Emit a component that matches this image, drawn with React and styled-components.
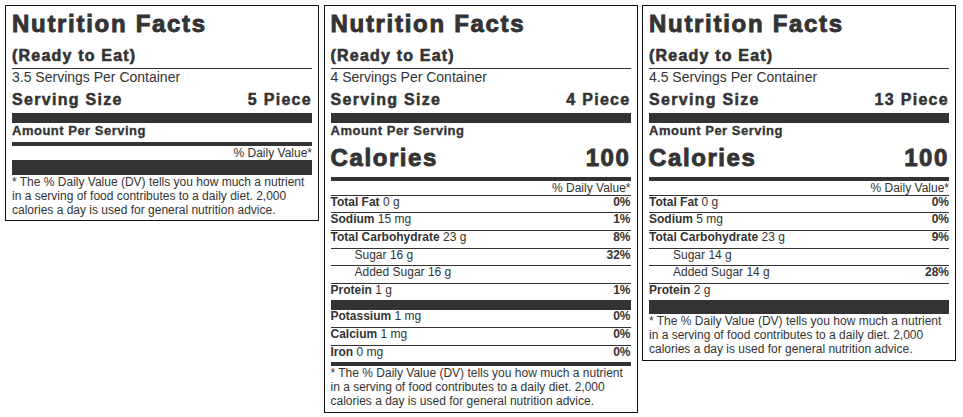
import React from "react";
import styled, { createGlobalStyle } from "styled-components";

const GlobalStyle = createGlobalStyle`
  body {
    margin: 0;
    background: #fff;
    font-family: "Liberation Sans", Arial, sans-serif;
  }
`;

const labels = [
    {servings: "3.5", size: "5 Piece", calories: null, nutrients: [], vitamins: []},
    {
        servings: "4", size: "4 Piece", calories: 100,
        nutrients: [
            {name: "Total Fat", amount: "0 g", dv: "0%"},
            {name: "Sodium", amount: "15 mg", dv: "1%"},
            {name: "Total Carbohydrate", amount: "23 g", dv: "8%"},
            {name: "Sugar", amount: "16 g", dv: "32%", sub: true},
            {name: "Added Sugar", amount: "16 g", sub: true},
            {name: "Protein", amount: "1 g", dv: "1%"},
        ],
        vitamins: [
            {name: "Potassium", amount: "1 mg", dv: "0%"},
            {name: "Calcium", amount: "1 mg", dv: "0%"},
            {name: "Iron", amount: "0 mg", dv: "0%"},
        ]
    },
    {
        servings: "4.5", size: "13 Piece", calories: 100,
        nutrients: [
            {name: "Total Fat", amount: "0 g", dv: "0%"},
            {name: "Sodium", amount: "5 mg", dv: "0%"},
            {name: "Total Carbohydrate", amount: "23 g", dv: "9%"},
            {name: "Sugar", amount: "14 g", sub: true},
            {name: "Added Sugar", amount: "14 g", dv: "28%", sub: true},
            {name: "Protein", amount: "2 g"},
        ],
        vitamins: []
    },
];

const NutrientRow = ({item}) => (
    <Row $sub={item.sub}>
        <span>{item.sub ? item.name : <b>{item.name}</b>} {item.amount}</span>
        {item.dv && <b>{item.dv}</b>}
    </Row>
);

const NutritionLabel = ({label}) => (
    <Label>
        <Title>Nutrition Facts</Title>
        <Subtitle>(Ready to Eat)</Subtitle>
        <Servings>{label.servings} Servings Per Container</Servings>
        <ServingSize>
            <span>Serving Size</span>
            <span>{label.size}</span>
        </ServingSize>
        <AmountBlock>
            <Amount>Amount Per Serving</Amount>
            {label.calories !== null &&
            <Calories>
                <span>Calories</span>
                <span>{label.calories}</span>
            </Calories>}
        </AmountBlock>
        <DailyValue>% Daily Value*</DailyValue>
        {label.nutrients.map((item, index) => <NutrientRow key={index} item={item}/>)}
        <ThickBar/>
        {label.vitamins.map((item, index) => <NutrientRow key={index} item={item}/>)}
        <Footnote>
            * The % Daily Value (DV) tells you how much a nutrient in a serving of food contributes to a daily
            diet. 2,000 calories a day is used for general nutrition advice.
        </Footnote>
    </Label>
);

const App = () => (
    <>
        <GlobalStyle/>
        <Page>
            {labels.map((label, index) => <NutritionLabel key={index} label={label}/>)}
        </Page>
    </>
);

const Page = styled.div`
    display: flex;
    align-items: flex-start;
    gap: 4.5px;
    padding: 5px;
`;

const Label = styled.section`
    width: 300px;
    border: 1px solid #111;
    padding: 4px 6px 3.5px;
    color: #333;
    font-size: 12px;
`;

const Title = styled.h1`
    margin: 0;
    font-size: 24px;
    line-height: 28px;
    font-weight: 700;
    letter-spacing: 1.7px;
    -webkit-text-stroke: 0.9px #333;
`;

const Subtitle = styled.h2`
    margin: 7.5px 0 0;
    padding-bottom: 2.5px;
    border-bottom: 1px solid #333;
    font-size: 16px;
    line-height: 20px;
    font-weight: 700;
    letter-spacing: 1.2px;
    -webkit-text-stroke: 0.6px #333;
`;

const Servings = styled.div`
    font-size: 14px;
    line-height: 16px;
`;

const ServingSize = styled.div`
    display: flex;
    justify-content: space-between;
    margin-top: 5px;
    padding-bottom: 3px;
    border-bottom: 10px solid #333;
    font-size: 16px;
    line-height: 20px;
    font-weight: 700;
    letter-spacing: 1.3px;
    -webkit-text-stroke: 0.5px #333;
`;

const AmountBlock = styled.div`
    padding-bottom: 2.5px;
    border-bottom: 4px solid #333;
`;

const Amount = styled.div`
    font-size: 13px;
    line-height: 16px;
    font-weight: 700;
    letter-spacing: 0.5px;
    -webkit-text-stroke: 0.3px #333;
`;

const Calories = styled.div`
    display: flex;
    justify-content: space-between;
    margin: 5.4px 0 2px;
    font-size: 24px;
    line-height: 28px;
    font-weight: 700;
    letter-spacing: 1.6px;
    -webkit-text-stroke: 0.9px #333;
`;

const DailyValue = styled.div`
    text-align: right;
    line-height: 14px;
    border-bottom: 1px solid #333;
`;

const Row = styled.div`
    display: flex;
    justify-content: space-between;
    line-height: 13.3px;
    padding: 0 0 3.3px ${props => props.$sub ? "24px" : "0"};

    & + & {
        border-top: 1px solid #333;
    }
`;

const ThickBar = styled.div`
    height: 10px;
    background: #333;
`;

const Footnote = styled.p`
    margin: 0;
    border-top: 4px solid #333;
    line-height: 14px;
`;

export default App
